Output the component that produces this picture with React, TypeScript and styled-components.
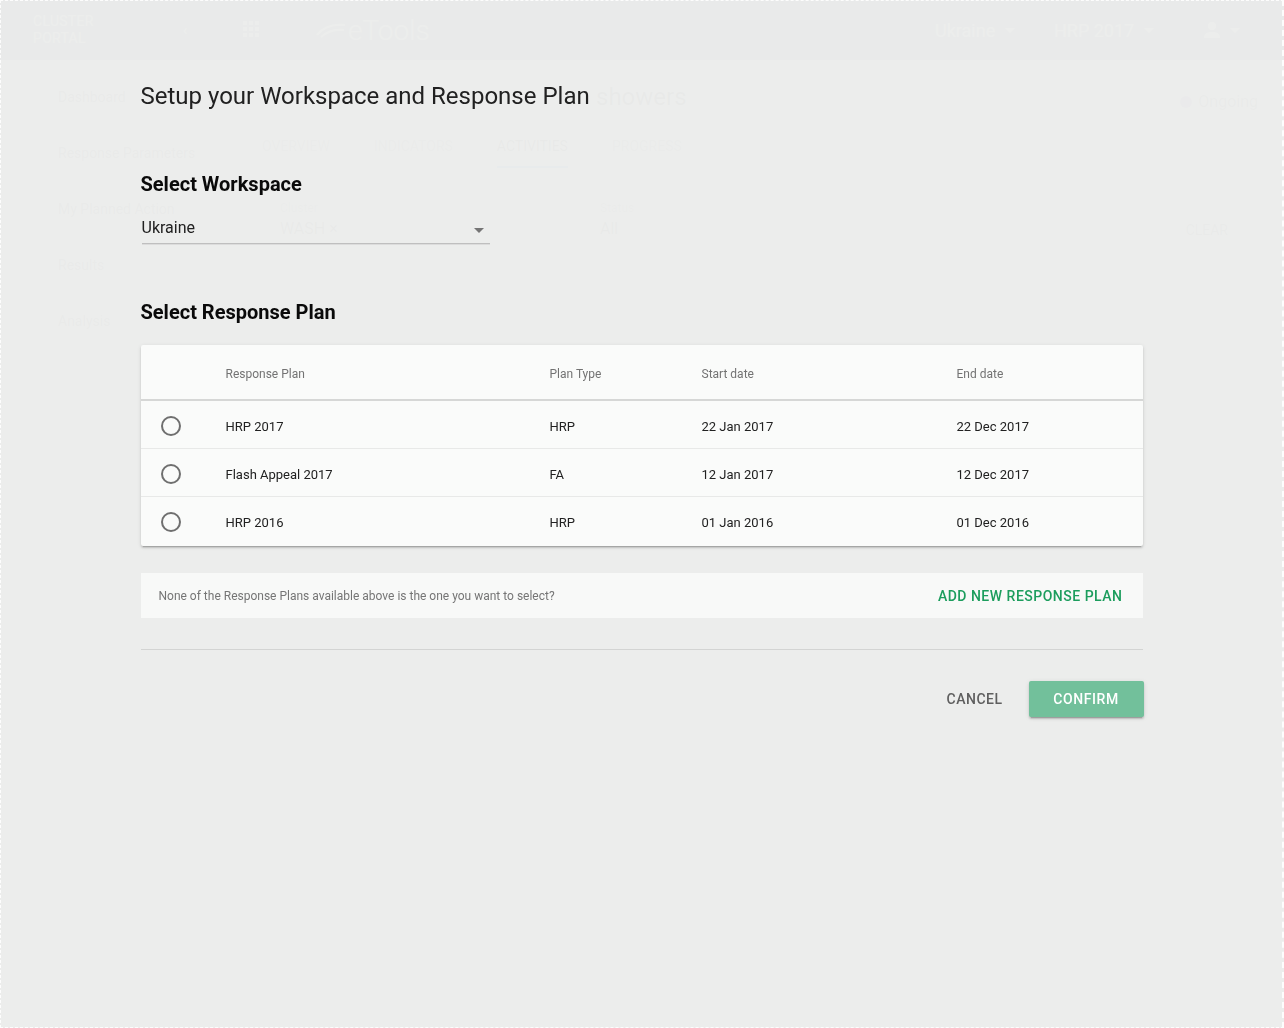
import React from "react";
import styled, { createGlobalStyle } from "styled-components";

const Global = createGlobalStyle`
  html, body { margin: 0; padding: 0; }
  body {
    font-family: Roboto, "Noto Sans", "Liberation Sans", sans-serif;
    background: #ffffff;
    color: #212121;
    -webkit-font-smoothing: antialiased;
  }
  * { box-sizing: border-box; }
`;

/* ---------- background application (behind the modal overlay) ---------- */

const AppShell = styled.div`
  width: 1284px;
  height: 1028px;
  overflow: hidden;
  background: #ffffff;
`;

const TopBar = styled.header`
  height: 60px;
  background: #4a5e68;
  color: #ffffff;
  display: flex;
  align-items: center;
  padding: 0 0 0 33px;
`;

const PortalName = styled.div`
  width: 150px;
  font-size: 14px;
  line-height: 17px;
  text-transform: uppercase;
  letter-spacing: 0.3px;
`;

const Chevron = styled.span`
  width: 60px;
  font-size: 14px;
`;

const AppsIcon = styled.svg`
  width: 18px;
  height: 18px;
  margin-right: 55px;
`;

const Logo = styled.div`
  display: flex;
  align-items: center;
  gap: 2px;
  font-size: 28px;
  font-weight: 300;
`;

const TopRight = styled.div`
  margin-left: auto;
  display: flex;
  align-items: center;
  font-size: 18px;
  padding-right: 40px;
`;

const TopSelect = styled.div<{ $w: number }>`
  width: ${(p) => p.$w}px;
  display: flex;
  align-items: center;
  gap: 10px;
`;

const Caret = styled.span`
  display: inline-block;
  width: 0;
  height: 0;
  border-left: 5px solid transparent;
  border-right: 5px solid transparent;
  border-top: 5px solid currentColor;
`;

const AppBody = styled.div`
  display: grid;
  grid-template-columns: 240px 1fr;
`;

const SideNav = styled.nav`
  display: flex;
  flex-direction: column;
  padding-top: 9px;
`;

const SideItem = styled.div`
  height: 56px;
  display: flex;
  align-items: center;
  padding-left: 58px;
  font-size: 14px;
  color: #424242;
`;

const MainCol = styled.div`
  display: flex;
  flex-direction: column;
  padding: 0 26px 0 22px;
`;

const PageHead = styled.div`
  height: 65px;
  display: flex;
  align-items: flex-end;
  padding: 0 0 14px 334px;
  justify-content: space-between;
`;

const PageTitle = styled.h1`
  margin: 0;
  font-size: 24px;
  font-weight: 400;
  color: #212121;
`;

const StatusChip = styled.div`
  display: flex;
  align-items: center;
  gap: 6px;
  font-size: 16px;
  color: #555;
  &::before {
    content: "";
    width: 12px;
    height: 12px;
    border-radius: 50%;
    background: #7b5ea6;
  }
`;

const Tabs = styled.div`
  display: flex;
  gap: 44px;
  height: 42px;
  align-items: center;
`;

const Tab = styled.div<{ $active?: boolean }>`
  font-size: 14px;
  text-transform: uppercase;
  color: ${(p) => (p.$active ? "#212121" : "#777")};
  padding: 14px 0 12px;
  border-bottom: 2px solid ${(p) => (p.$active ? "#0099ff" : "transparent")};
`;

const Filters = styled.div`
  display: flex;
  align-items: flex-end;
  gap: 30px;
  padding: 34px 0 0 18px;
`;

const Filter = styled.div<{ $w: number }>`
  width: ${(p) => p.$w}px;
  display: flex;
  flex-direction: column;
  gap: 4px;
  font-size: 16px;
  color: #333;
  & > small {
    font-size: 12px;
    color: #888;
  }
`;

const ClearBtn = styled.div`
  margin-left: auto;
  font-size: 14px;
  color: #555;
  padding-right: 30px;
`;

/* ---------- modal overlay + dialog ---------- */

const Overlay = styled.div`
  position: fixed;
  inset: 0;
  background: rgba(236, 237, 236, 0.985);
  border: 1px dashed rgba(255, 255, 255, 0.9);
  border-right-width: 2px;
  display: flex;
  justify-content: center;
`;

const Dialog = styled.section`
  width: 1002px;
  padding-top: 79px;
  display: flex;
  flex-direction: column;
`;

const Title = styled.h2`
  margin: 0;
  font-size: 24px;
  line-height: 32px;
  font-weight: 400;
  color: #212121;
`;

const SectionHeading = styled.h3<{ $top: number }>`
  margin: ${(p) => p.$top}px 0 0;
  font-size: 20px;
  line-height: 28px;
  font-weight: 700;
  color: #0a0a0a;
`;

const Select = styled.div`
  margin-top: 18px;
  margin-left: 1px;
  width: 348px;
  display: flex;
  align-items: center;
  justify-content: space-between;
  font-size: 16px;
  line-height: 24px;
  color: #212121;
  padding: 0 6px 3px 0;
  border-bottom: 1px solid #bfbfbf;
  box-shadow: 0 1px 0 #dcdcdc;
`;

const SelectArrow = styled.span`
  width: 0;
  height: 0;
  margin-top: 4px;
  border-left: 5px solid transparent;
  border-right: 5px solid transparent;
  border-top: 5px solid #757575;
`;

const TableCard = styled.div`
  margin-top: 19px;
  background: #fafbfa;
  border-radius: 2px;
  box-shadow: 0 2px 2px 0 rgba(0, 0, 0, 0.12), 0 1px 4px 0 rgba(0, 0, 0, 0.1),
    0 3px 1px -2px rgba(0, 0, 0, 0.16);
`;

const Row = styled.div<{ $head?: boolean; $last?: boolean }>`
  display: grid;
  grid-template-columns: 85px 324px 152px 255px 1fr;
  align-items: center;
  height: ${(p) => (p.$head ? 56 : p.$last ? 49 : 48)}px;
  padding-top: ${(p) => (p.$last ? 1 : 3)}px;
  font-size: ${(p) => (p.$head ? 12 : 13)}px;
  color: ${(p) => (p.$head ? "#737373" : "#212121")};
  border-bottom: ${(p) =>
    p.$last ? "none" : p.$head ? "2px solid #d6d7d6" : "1px solid #e8e9e8"};
`;

const RadioCell = styled.div`
  padding-left: 20px;
  display: flex;
  align-items: center;
`;

const Radio = styled.span`
  width: 20px;
  height: 20px;
  margin-top: -1px;
  border-radius: 50%;
  border: 2px solid #6f6f6f;
`;

const InfoBar = styled.div`
  margin-top: 27px;
  height: 45px;
  background: #f8f9f8;
  display: flex;
  align-items: center;
  justify-content: space-between;
  padding: 1px 20px 0 18px;
`;

const InfoText = styled.span`
  font-size: 12px;
  color: #757575;
`;

const TextButton = styled.button<{ $tone: "green" | "gray" }>`
  border: 0;
  background: transparent;
  font-family: inherit;
  font-size: 14px;
  font-weight: 500;
  letter-spacing: 0.5px;
  text-transform: uppercase;
  color: ${(p) => (p.$tone === "green" ? "#1c9d5d" : "#5f5f5f")};
  padding: 0;
  cursor: pointer;
`;

const Divider = styled.hr`
  margin: 31px 0 0;
  border: 0;
  height: 1px;
  background: #d3d4d3;
`;

const Actions = styled.div`
  margin-top: 31px;
  display: flex;
  justify-content: flex-end;
  align-items: center;
  gap: 26px;
  margin-right: -1px;
`;

const ConfirmButton = styled.button`
  height: 36px;
  width: 115px;
  border: 0;
  border-radius: 2px;
  background: #72c09b;
  color: #ffffff;
  font-family: inherit;
  font-size: 14px;
  font-weight: 500;
  letter-spacing: 0.6px;
  text-transform: uppercase;
  box-shadow: 0 2px 2px 0 rgba(0, 0, 0, 0.14), 0 1px 5px 0 rgba(0, 0, 0, 0.1),
    0 3px 1px -2px rgba(0, 0, 0, 0.18);
  cursor: pointer;
`;

const plans = [
  { name: "HRP 2017", type: "HRP", start: "22 Jan 2017", end: "22 Dec 2017" },
  { name: "Flash Appeal 2017", type: "FA", start: "12 Jan 2017", end: "12 Dec 2017" },
  { name: "HRP 2016", type: "HRP", start: "01 Jan 2016", end: "01 Dec 2016" },
];

export default function App() {
  return (
    <>
      <Global />
      <AppShell>
        <TopBar>
          <PortalName>
            Cluster
            <br />
            Portal
          </PortalName>
          <Chevron>‹</Chevron>
          <AppsIcon viewBox="0 0 18 18" fill="currentColor">
            {[0, 6, 12].map((y) =>
              [0, 6, 12].map((x) => <rect key={`${x}-${y}`} x={x} y={y} width="4" height="4" />)
            )}
          </AppsIcon>
          <Logo>
            <svg width="30" height="16" viewBox="0 0 30 16" fill="none" stroke="currentColor" strokeWidth="2">
              <path d="M1 13 C 8 4, 18 2, 29 3" />
              <path d="M5 15 C 12 9, 20 7, 28 8" />
            </svg>
            eTools
          </Logo>
          <TopRight>
            <TopSelect $w={119}>
              Ukraine <Caret />
            </TopSelect>
            <TopSelect $w={150}>
              HRP 2017 <Caret />
            </TopSelect>
            <TopSelect $w={40}>
              <svg width="16" height="16" viewBox="0 0 16 16" fill="currentColor">
                <circle cx="8" cy="4" r="4" />
                <path d="M0 16 C0 11 4 10 8 10 C12 10 16 11 16 16 Z" />
              </svg>
              <Caret />
            </TopSelect>
          </TopRight>
        </TopBar>
        <AppBody>
          <SideNav>
            <SideItem>Dashboard</SideItem>
            <SideItem>Response Parameters</SideItem>
            <SideItem>My Planned Action</SideItem>
            <SideItem>Results</SideItem>
            <SideItem>Analysis</SideItem>
          </SideNav>
          <MainCol>
            <PageHead>
              <PageTitle>showers</PageTitle>
              <StatusChip>Ongoing</StatusChip>
            </PageHead>
            <Tabs>
              <Tab>Overview</Tab>
              <Tab>Indicators</Tab>
              <Tab $active>Activities</Tab>
              <Tab>Progress</Tab>
            </Tabs>
            <Filters>
              <Filter $w={290}>
                <small>Cluster</small>
                WASH ×
              </Filter>
              <Filter $w={290}>
                <small>Status</small>
                All
              </Filter>
              <ClearBtn>CLEAR</ClearBtn>
            </Filters>
          </MainCol>
        </AppBody>
      </AppShell>

      <Overlay>
        <Dialog role="dialog" aria-label="Setup your Workspace and Response Plan">
          <Title>Setup your Workspace and Response Plan</Title>

          <SectionHeading $top={58}>Select Workspace</SectionHeading>
          <Select>
            Ukraine
            <SelectArrow />
          </Select>

          <SectionHeading $top={54}>Select Response Plan</SectionHeading>
          <TableCard>
            <Row $head>
              <span />
              <span>Response Plan</span>
              <span>Plan Type</span>
              <span>Start date</span>
              <span>End date</span>
            </Row>
            {plans.map((p, i) => (
              <Row key={p.name} $last={i === plans.length - 1}>
                <RadioCell>
                  <Radio />
                </RadioCell>
                <span>{p.name}</span>
                <span>{p.type}</span>
                <span>{p.start}</span>
                <span>{p.end}</span>
              </Row>
            ))}
          </TableCard>

          <InfoBar>
            <InfoText>None of the Response Plans available above is the one you want to select?</InfoText>
            <TextButton $tone="green">Add new response plan</TextButton>
          </InfoBar>

          <Divider />

          <Actions>
            <TextButton $tone="gray">Cancel</TextButton>
            <ConfirmButton>Confirm</ConfirmButton>
          </Actions>
        </Dialog>
      </Overlay>
    </>
  );
}
